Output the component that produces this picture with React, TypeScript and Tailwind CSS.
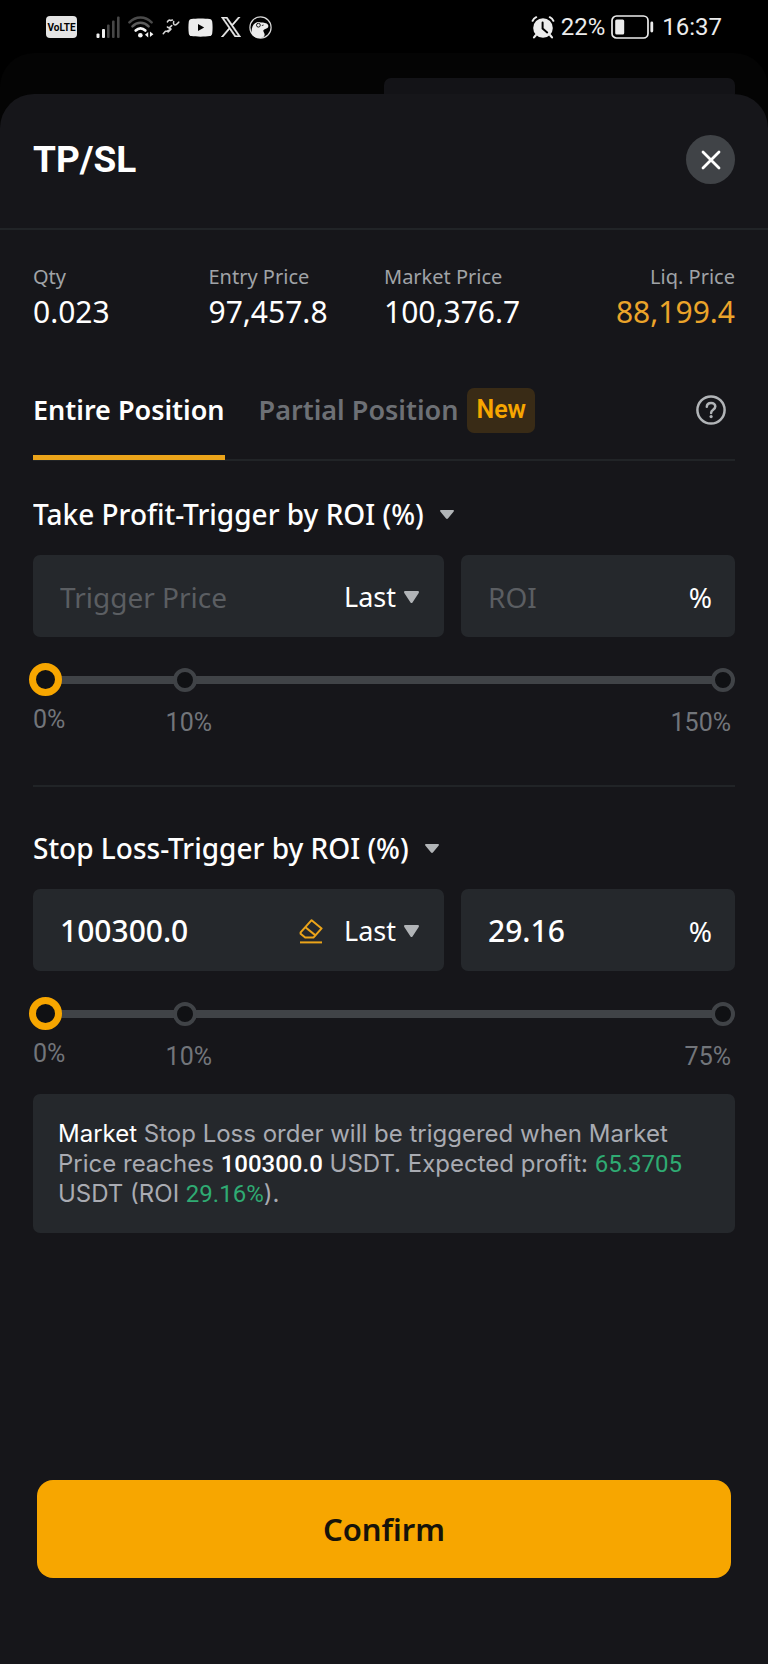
import { useId, useState } from "react";

function SignalIcon() {
  return (
    <svg className="h-[23px] w-6" viewBox="0 0 24 23" aria-hidden="true">
      <g fill="#f2f2f2">
        <rect x="0.5" y="17.5" width="3" height="4.5" rx="1" />
        <rect x="6" y="13" width="3" height="9" rx="1" />
      </g>
      <g fill="#474747">
        <rect x="11" y="8.5" width="2.6" height="13.5" rx="1" />
        <rect x="16" y="4.5" width="2.6" height="17.5" rx="1" />
        <rect x="21" y="0.5" width="2.6" height="21.5" rx="1" />
      </g>
    </svg>
  );
}

function WifiIcon() {
  return (
    <svg className="h-[23px] w-[26px]" viewBox="0 0 27 23" fill="none" strokeLinecap="round" aria-hidden="true">
      <path d="M1.5 6.2C8 -0.6 18 -0.6 24.5 6.2" stroke="#4a4a4a" strokeWidth="2.6" />
      <path d="M4.6 10.4C9.5 5.4 16.5 5.4 21.4 10.4" stroke="#5c5c5c" strokeWidth="2.6" />
      <path d="M8 14.6C11 11.6 15 11.6 18 14.6" stroke="#f5f5f5" strokeWidth="2.8" />
      <circle cx="12.8" cy="19.6" r="2.4" fill="#f5f5f5" />
      <path d="M21 16.2v5.8l-3.4-2.9zM22.8 15.6v5.8l3.6-2.9z" fill="#f5f5f5" />
    </svg>
  );
}

function RunnerIcon() {
  return (
    <svg className="h-[18px] w-[18px]" viewBox="0 0 20 18" fill="none" stroke="#d8d8d8" strokeWidth="1.7" strokeLinecap="round" strokeLinejoin="round" aria-hidden="true">
      <path d="M6 3.4C7 1.4 8.4 .9 9.6 1.8L11.6 1.3" />
      <path d="M13 2.8c-.6 2.4.1 4 1.5 4S16.8 5.6 18.6 3.6" />
      <path d="M6 9L10 11.400 5.600 13.600 3.800 13.800 1.400 16.400M10 11.400L6.800 14.600M8.600 9.400L10.800 7.400" />
    </svg>
  );
}

function YoutubeIcon() {
  return (
    <svg className="h-[19px] w-[25px]" viewBox="0 0 25 19" aria-hidden="true">
      <path fill="#ececec" d="M3.400.9C8 .2 17 .2 21.600.9c1.500.2 2.400 1.200 2.600 2.700.5 3.800.5 8 0 11.800-.2 1.500-1.100 2.500-2.600 2.700-4.600.7-13.600.7-18.200 0C1.900 17.900 1 16.900.8 15.400.3 11.600.3 7.400.8 3.600 1 2.100 1.900 1.100 3.400.9z" />
      <path fill="#000" d="M10 5.900v7.200l6.200-3.600z" />
    </svg>
  );
}

function XLogo() {
  return (
    <svg className="h-5 w-5" viewBox="0 0 24 24" fill="#ececec" stroke="#ececec" strokeWidth="0.700" aria-hidden="true">
      <path d="M14.234 10.162 22.977 0h-2.072l-7.591 8.824L7.251 0H.258l9.168 13.343L.258 24H2.330l8.016-9.318L16.749 24h6.993zm-2.837 3.299-.929-1.329L3.076 1.560h3.182l5.965 8.532.929 1.329 7.754 11.090h-3.182z" />
    </svg>
  );
}

function BirdIcon() {
  return (
    <svg className="h-[23px] w-[23px]" viewBox="0 0 23 23" aria-hidden="true">
      <circle cx="11.500" cy="11.500" r="10.600" fill="#000" stroke="#d8d8d8" strokeWidth="1.200" />
      <path fill="#ececec" d="M3 18.600C1.900 14 3.200 8.600 6.400 7 8 5.800 10.400 5.600 12 6.600c2.600 0 5.600.4 7 2.200.6 1.200.4 2.400-.6 3.200-1.200.8-3 1-4 2.200-.4 1.400.8 2.400 1.200 3.800.2 1.400-.4 2.400-1.400 3.200C10 23 5.400 22 3 18.600z" />
      <circle cx="9.400" cy="9.200" r="1.900" fill="#ececec" stroke="#000" strokeWidth="0.900" />
      <path d="M12.800 9.600l1.800-.6" stroke="#000" strokeWidth="0.800" />
    </svg>
  );
}

function AlarmIcon() {
  return (
    <svg className="h-[23px] w-6" viewBox="0 0 24 23" fill="none" strokeLinecap="round" aria-hidden="true">
      <circle cx="12" cy="12" r="9.800" fill="#ececec" />
      <path d="M1.600 4.800C2.400 3 3.600 1.900 5.200 1.200M22.400 4.800C21.600 3 20.400 1.900 18.800 1.200" stroke="#ececec" strokeWidth="2" />
      <path d="M4.800 19.200L3 21.400M19.200 19.200L21 21.400" stroke="#ececec" strokeWidth="2.200" />
      <path d="M11.600 6.400v6.200l4.600 3.800" stroke="#000" strokeWidth="2" />
    </svg>
  );
}

function BatteryIcon() {
  return (
    <svg className="h-6 w-[43px]" viewBox="0 0 43 24" aria-hidden="true">
      <rect x="1" y="1" width="36" height="22" rx="4.500" fill="none" stroke="#ececec" strokeWidth="1.700" />
      <rect x="4.200" y="4.500" width="9" height="15" rx="1.500" fill="#ececec" />
      <rect x="39.400" y="6.500" width="2.800" height="11" rx="1.400" fill="#ececec" />
    </svg>
  );
}

function CaretIcon({ className }: { className: string }) {
  return (
    <svg className={className} viewBox="0 0 15 12" preserveAspectRatio="none" fill="#b1b4b7" aria-hidden="true">
      <path d="M1.300 0h12.400c1.100 0 1.600 1 1 1.900L8.500 11.400c-.5.700-1.500.7-2 0L.3 1.900C-.3 1 .2 0 1.300 0z" />
    </svg>
  );
}

function EraserIcon() {
  return (
    <svg className="h-[25px] w-6" viewBox="0 0 24 25" fill="none" stroke="#eba41a" strokeWidth="2" strokeLinejoin="round" aria-hidden="true">
      <path d="M12.600 1.200L22.600 9.400 14.400 18.600H6.200L1.600 14.800V13.400z" />
      <path d="M6.400 8.200L16.800 16.600" />
      <path d="M1 23.400H23" />
    </svg>
  );
}

function HelpIcon() {
  return (
    <svg className="h-[30px] w-[30px]" viewBox="0 0 30 30" fill="none" stroke="#b1b4b7" strokeLinecap="round" aria-hidden="true">
      <circle cx="15" cy="15" r="13.600" strokeWidth="2.500" />
      <path d="M10.800 11.800C10.900 9.300 12.700 7.900 15.100 7.900c2.400 0 4.200 1.500 4.200 3.700 0 3.300-4.200 3.100-4.200 6.300" strokeWidth="2.500" />
      <circle cx="15.100" cy="21.600" r="1.600" fill="#b1b4b7" stroke="none" />
    </svg>
  );
}

function StatusBar() {
  return (
    <div className="flex h-[53px] items-center justify-between pt-px pr-[46px] pl-[46px] font-['Roboto',sans-serif] text-[#ececec]">
      <div className="flex items-center">
        <span className="flex h-[22px] w-[31px] items-center justify-center rounded-[4px] bg-[#e4e4e4] text-[10px] font-bold text-black">
          VoLTE
        </span>
        <div className="ml-[19px] flex items-center gap-[8px]">
          <SignalIcon />
          <WifiIcon />
          <RunnerIcon />
          <YoutubeIcon />
          <XLogo />
          <BirdIcon />
        </div>
      </div>
      <div className="flex items-center text-[24px] leading-7">
        <AlarmIcon />
        <span className="ml-1.5">22%</span>
        <span className="ml-1.5">
          <BatteryIcon />
        </span>
        <span className="ml-2">16:37</span>
      </div>
    </div>
  );
}

type StatProps = { label: string; value: string; className?: string; valueClassName?: string };

function Stat({ label, value, className = "", valueClassName = "text-white" }: StatProps) {
  return (
    <div className={className}>
      <dt className="text-[20px] leading-7 text-[#a0a3a7]">{label}</dt>
      <dd className={`text-[30px] leading-[42px] ${valueClassName}`}>{value}</dd>
    </div>
  );
}

type TriggerProps = {
  title: string;
  price: string;
  roi: string;
  max: number;
  clearable?: boolean;
};

function TriggerSection({ title, price: initialPrice, roi: initialRoi, max, clearable = false }: TriggerProps) {
  const id = useId();
  const [price, setPrice] = useState(initialPrice);
  const [roi, setRoi] = useState(initialRoi);
  const [percent, setPercent] = useState(0);

  return (
    <section>
      <div className="flex h-10 items-center gap-4">
        <select aria-label="Trigger type" className="appearance-none bg-transparent text-[28px] leading-10 font-medium text-white outline-none">
          <option>{title}</option>
        </select>
        <CaretIcon className="h-[9px] w-[14px]" />
      </div>

      <div className="mt-[21px] grid grid-cols-[3fr_2fr] gap-[17px]">
        <div className="flex h-[82px] min-w-0 items-center rounded-[7px] bg-[#25282c] pt-0.5 pr-[25px] pl-[27px]">
          <input
            aria-label="Trigger Price"
            placeholder="Trigger Price"
            value={price}
            onChange={(e) => setPrice(e.target.value)}
            className="min-w-0 flex-1 bg-transparent text-[30px] leading-10 font-medium text-white outline-none placeholder:text-[28px] placeholder:font-normal placeholder:text-[#5b5e62]"
          />
          {clearable && (
            <button type="button" aria-label="Clear trigger price" className="mr-[21px]" onClick={() => setPrice("")}>
              <EraserIcon />
            </button>
          )}
          <select aria-label="Price type" className="appearance-none bg-transparent text-[27px] leading-10 text-white outline-none">
            <option>Last</option>
          </select>
          <CaretIcon className="ml-2 h-3 w-[15px]" />
        </div>
        <div className="flex h-[82px] min-w-0 items-center rounded-[7px] bg-[#25282c] pt-0.5 pr-[23px] pl-[27px]">
          <input
            id={`${id}-roi`}
            placeholder="ROI"
            value={roi}
            onChange={(e) => setRoi(e.target.value)}
            className="min-w-0 flex-1 bg-transparent text-[30px] leading-10 font-medium text-white outline-none placeholder:text-[28px] placeholder:font-normal placeholder:text-[#5b5e62]"
          />
          <label htmlFor={`${id}-roi`} className="text-[28px] leading-10 text-white">
            %
          </label>
        </div>
      </div>

      <div className="relative mt-[26px] flex h-[33px] items-center">
        <span className="mx-3 h-2 flex-1 bg-[#404347]" />
        <span className="absolute left-[20%] h-6 w-6 rounded-full border-4 border-[#404347] bg-[#101114]" />
        <span className="absolute right-0 h-6 w-6 rounded-full border-4 border-[#404347] bg-[#101114]" />
        <input
          type="range"
          aria-label={title}
          min={0}
          max={max}
          value={percent}
          onChange={(e) => setPercent(Number(e.target.value))}
          className="absolute -right-1 -left-1 h-[33px] appearance-none bg-transparent outline-none [&::-webkit-slider-thumb]:h-[33px] [&::-webkit-slider-thumb]:w-[33px] [&::-webkit-slider-thumb]:appearance-none [&::-webkit-slider-thumb]:rounded-full [&::-webkit-slider-thumb]:border-[7px] [&::-webkit-slider-thumb]:border-[#f7a600] [&::-webkit-slider-thumb]:bg-[#101114]"
        />
      </div>
      <div className="mt-2 flex h-[34px] pr-1 font-['Roboto',sans-serif] text-[25px] leading-[31px] text-[#72757a]">
        <span className="w-[19%] self-start">0%</span>
        <span className="flex-1 self-end">10%</span>
        <span className="self-end">{max}%</span>
      </div>
    </section>
  );
}

export default function App() {
  return (
    <div className="flex min-h-screen flex-col bg-black font-['Noto_Sans',sans-serif]">
      <StatusBar />
      <div className="flex flex-1 flex-col rounded-t-[34px] bg-[#040404] pt-[25px]">
        <div className="mr-[33px] ml-[50%] h-4 rounded-t-[7px] bg-[#131317]" />
        <main className="flex flex-1 flex-col rounded-t-[34px] bg-[#16161a]">
          <header className="flex items-center justify-between border-b-2 border-[#212427] px-[33px] pt-[41px] pb-[44px]">
            <h1 className="font-['Roboto',sans-serif] text-[37px] leading-[48px] font-bold text-white">TP/SL</h1>
            <button type="button" aria-label="Close" className="flex h-[49px] w-[49px] items-center justify-center rounded-full bg-[#404347]">
              <svg className="h-5 w-5" viewBox="0 0 20 20" stroke="#fff" strokeWidth="2.800" strokeLinecap="round" aria-hidden="true">
                <path d="M2 2l16 16M18 2L2 18" />
              </svg>
            </button>
          </header>

          <div className="flex flex-1 flex-col px-[33px]">
            <dl className="mt-[33px] grid grid-cols-4">
              <Stat label="Qty" value="0.023" />
              <Stat label="Entry Price" value="97,457.8" />
              <Stat label="Market Price" value="100,376.7" />
              <Stat label="Liq. Price" value="88,199.4" className="text-right" valueClassName="text-[#eba42a]" />
            </dl>

            <div className="mt-[44px] flex h-[84px] items-stretch border-b-2 border-[#212427]">
              <div role="tablist" className="flex gap-[34px]">
                <button role="tab" type="button" aria-selected="true" className="-mb-px border-b-[5px] border-[#eba41a] pb-[12px] text-[27px] font-semibold text-white">
                  Entire Position
                </button>
                <button role="tab" type="button" aria-selected="false" className="flex items-center gap-[9px] pb-[16px] text-[27px] font-semibold text-[#6d7075]">
                  Partial Position
                  <span className="flex h-[45px] items-center rounded-[7px] bg-[#392b16] px-[9px] font-['Roboto',sans-serif] text-[25px] text-[#f7a600]">New</span>
                </button>
              </div>
              <button type="button" aria-label="Help" className="mr-[9px] ml-auto pb-[16px]">
                <HelpIcon />
              </button>
            </div>

            <div className="mt-[33px]">
              <TriggerSection title="Take Profit-Trigger by ROI (%)" price="" roi="" max={150} />
            </div>
            <hr className="mt-[47px] mb-[41px] border-t-2 border-[#212427]" />
            <TriggerSection title="Stop Loss-Trigger by ROI (%)" price="100300.0" roi="29.16" max={75} clearable />

            <p className="mt-[22px] rounded-[7px] bg-[#25282c] px-[25px] pt-[25px] pb-[24px] font-['Inter',sans-serif] text-[24px] leading-[30px] text-[#a9abb2]">
              <span className="text-white">Market</span> Stop Loss order will be triggered when Market Price reaches{" "}
              <span className="font-['Roboto',sans-serif] font-medium text-white">100300.0</span> USDT. Expected profit:{" "}
              <span className="font-['Roboto',sans-serif] text-[#2fab73]">65.3705</span> USDT (ROI{" "}
              <span className="font-['Roboto',sans-serif] text-[#2fab73]">29.16%</span>).
            </p>

            <div className="mt-auto px-1 pt-8 pb-[86px]">
              <button type="button" className="h-[98px] w-full rounded-[16px] bg-[#f7a600] text-[31px] font-semibold text-[#16130a]">
                Confirm
              </button>
            </div>
          </div>
        </main>
      </div>
    </div>
  );
}
